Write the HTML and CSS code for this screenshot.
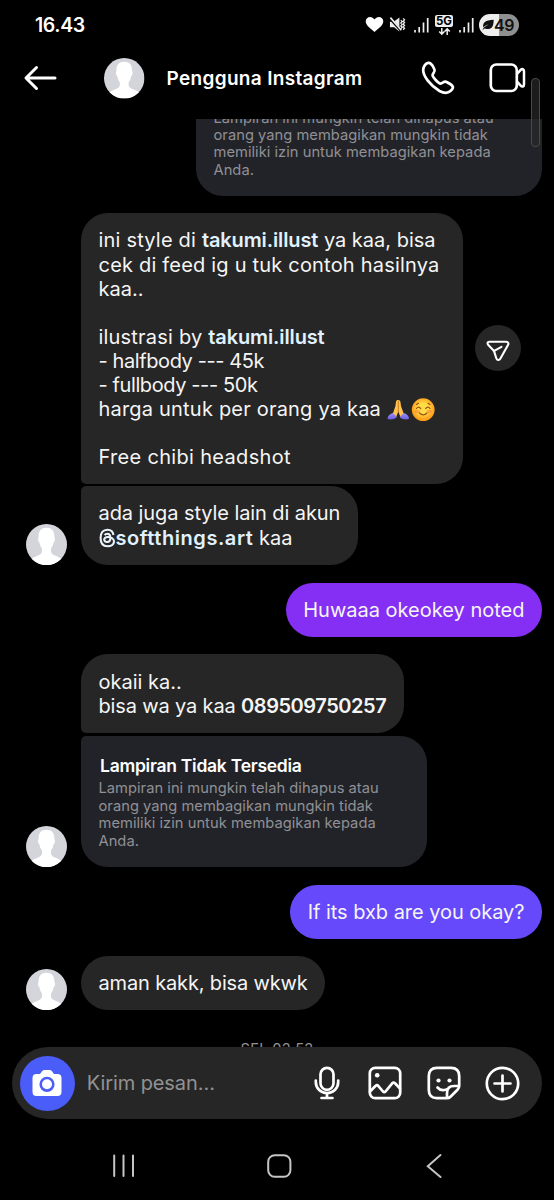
FILE: index.html
```
<!DOCTYPE html>
<html lang="id">
<head>
<meta charset="utf-8">
<title>Pengguna Instagram</title>
<link rel="stylesheet" href="styles.css">
</head>
<body>
<svg class="defs" width="0" height="0">
  <defs>
    <symbol id="person" viewBox="0 0 41 41">
      <circle cx="20.500" cy="20.500" r="20.500" fill="#d3d5db"/>
      <path d="M20.500 3.800C15 3.800 12.300 7.500 12.600 13.200C11.600 13.700 11.900 17.500 13.400 18.300C13.900 21.500 14.800 23 16 24.600C16.300 29 15.500 30.300 11.500 31.700C8 33 6.600 34.300 5.600 34.700A20.500 20.500 0 0 0 35.400 34.700C34.400 34.300 33 33 29.500 31.700C25.500 30.300 24.700 29 25 24.600C26.200 23 27.100 21.500 27.600 18.300C29.100 17.500 29.400 13.700 28.400 13.200C28.700 7.500 26 3.800 20.500 3.800Z" fill="#fff"/>
    </symbol>
    <symbol id="signal" viewBox="0 0 15 16">
      <path d="M1 13v2.500M5.200 10v5.500M9.500 5.500v10M13.700 1v14.500" stroke="#eee" stroke-width="1.700" fill="none"/>
    </symbol>
  </defs>
</svg>
<div class="phone">
  <div class="status">
    <span class="clock">16.43</span>
    <div class="indicators">
      <svg class="heart" width="19" height="17" viewBox="0 0 19 17"><path d="M9.500 16C6 13 .700 9.500.700 5.300C.700 .500 7-.800 9.500 3.500C12-.800 18.300.500 18.300 5.300C18.300 9.500 13 13 9.500 16Z" fill="#fff"/></svg>
      <svg class="mute" width="17" height="17" viewBox="0 0 18 17"><path d="M1 5.500h4L11 1v15L5.500 11.500H1Z" fill="#eee"/><path d="M0 1 13 15.500" stroke="#000" stroke-width="2.600"/><path d="M1.500 1.200 13 14.500" stroke="#eee" stroke-width="1.700"/><path d="M12.500 4l1.500 1.500-1.500 1.500 1.500 1.500-1.500 1.500 1.500 1.500-1.500 1.500M15 2l1.500 1.500L15 5l1.500 1.500L15 8l1.500 1.500L15 11l1.500 1.500L15 14" fill="none" stroke="#eee" stroke-width="1.300"/></svg>
      <svg class="sig-a" width="15" height="16"><use href="#signal"/></svg>
      <div class="net"><span class="net-label">5G</span><svg width="13" height="7" viewBox="0 0 13 7"><path d="M3.800 0v6M1.200 3.500 3.800 6.100l2.600-2.600M9.200 7V1M6.600 3.500 9.200.900l2.600 2.600" fill="none" stroke="#eee" stroke-width="1.500"/></svg></div>
      <svg class="sig-b" width="15" height="16"><use href="#signal"/></svg>
      <div class="battery"><svg width="12" height="12" viewBox="0 0 12 12"><path d="M.500 11.500C1 9 2.500 7.500 6.500 5.500C4 6 2.500 7 1.200 8.500C.500 4 3 1 11.700.800C11.500 6 11 9.500 6.500 10C4.500 10.200 3 9.800 2.300 9.500Z" fill="#111"/></svg><span>49</span></div>
    </div>
  </div>
  <header class="header">
    <svg class="back" width="34" height="26" viewBox="0 0 34 26"><path d="M31 13H2.500M12.500 2.500 2 13 12.500 23.500" fill="none" stroke="#fff" stroke-width="3" stroke-linecap="round" stroke-linejoin="round"/></svg>
    <svg class="head-avatar" width="40.500" height="40.500"><use href="#person"/></svg>
    <h1 class="name">Pengguna Instagram</h1>
    <svg class="call" width="34" height="34" viewBox="0 0 34 34"><path d="M7.200 1.800C5 2 2.200 5.500 2.200 9C2.200 15 9 24.500 18.500 30C23.500 32.600 26.500 32.600 29.500 30C31.500 28.200 32.500 26.600 31.600 25.200C30.800 23.900 26.500 21.400 25 20.700C22.500 19.600 21.500 23.300 18.800 22.500C16.500 21.500 12.500 16.800 11.600 14.700C11 12 14.500 11.500 13.500 8.700C13 7 10.800 3.500 9.700 2.600C9 2 8.300 1.700 7.200 1.800Z" fill="none" stroke="#fff" stroke-width="2.700" stroke-linejoin="round"/></svg>
    <svg class="video" width="37" height="30" viewBox="0 0 37 30"><rect x="1.800" y="1.500" width="26" height="26.500" rx="5.500" fill="none" stroke="#fff" stroke-width="2.700"/><path d="M28 11 31.700 6.800C33 5.600 35 6 35 8.200V21.500C35 23.700 33 24.100 31.700 22.700L28 18.600" fill="none" stroke="#fff" stroke-width="2.500" stroke-linejoin="round"/></svg>
  </header>
  <main class="chat">
    <div class="bubble card sent first">
      <p class="card-text">Lampiran ini mungkin telah dihapus atau<br>orang yang membagikan mungkin tidak<br>memiliki izin untuk membagikan kepada<br>Anda.</p>
    </div>
    <div class="row style-row">
      <div class="bubble start intro"><span class="wide">ini style di </span><b>takumi.illust</b> ya kaa, bisa<br><span class="wide">cek di feed ig u tuk contoh hasilnya</span><br>kaa..<br><br><span class="wide">ilustrasi by </span><b>takumi.illust</b><br><span class="tight">- halfbody --- 45k</span><br><span class="tight">- fullbody --- 50k</span><br><span class="wide">harga untuk per orang ya kaa </span><svg class="emoji" width="48" height="23" viewBox="0 0 48 23"><defs><radialGradient id="face" cy=".45"><stop offset=".45" stop-color="#ffdc45"/><stop offset="1" stop-color="#ff9d19"/></radialGradient><linearGradient id="sleeve" x2="0" y2="1"><stop stop-color="#a08df8"/><stop offset="1" stop-color="#6c5fe0"/></linearGradient></defs><path d="M10.800 2C8.800 2 9 4 8.500 8L5.500 16.500 9 19.500 11.300 13.500 13.600 19.500 17 16.500 14 8C13.500 4 13.500 2 11.700 2Z" fill="#ffc34d"/><path d="M11.300 2.500V14" stroke="#c97b22" stroke-width="1"/><path d="M5.800 15 10 19C7.500 21.500 3.500 22 .700 21C.300 18.500 2.500 16 5.800 15ZM16.800 15 12.600 19C15.100 21.500 19.100 22 21.900 21C22.300 18.500 20.100 16 16.800 15Z" fill="url(#sleeve)"/><circle cx="36.200" cy="11.700" r="11.400" fill="url(#face)"/><path d="M29.500 10.500Q31.500 7.800 33.700 10.500M38.700 10.500Q41 7.800 43 10.500M32.500 15Q36.200 18.800 40 15M29.500 6.500 31.500 5.300M43 6.500 41 5.300" fill="none" stroke="#99521c" stroke-width="1.200" stroke-linecap="round"/><path d="M29 13.500h2.500M41 13.500h2.500" stroke="#fa7946" stroke-width="3" stroke-linecap="round" opacity=".5"/></svg><br><br><span class="wider">Free chibi headshot</span></div>
      <div class="share"><svg width="24" height="22" viewBox="0 0 24 22"><path d="M3.300 1.800H20.300C22.300 1.800 22.900 3.500 22 5L14.300 18.800C13.200 20.700 10.900 20.300 10.300 18.300L8.200 11.600C8 11 7.600 10.500 7.100 10L2.300 5C.900 3.600 1.400 1.800 3.300 1.800ZM8.200 10.800 15.500 6.800" fill="none" stroke="#fff" stroke-width="2.100" stroke-linecap="round" stroke-linejoin="round"/></svg></div>
    </div>
    <div class="row">
      <svg class="avatar" width="41" height="41"><use href="#person"/></svg>
      <div class="bubble end duo"><span class="snug">ada juga style lain di akun</span><br><svg class="threads" width="17" height="20" viewBox="0 0 17 20"><path d="M14.500 7C13.900 3.200 11.800 1.700 8.500 1.700C3.800 1.700 1.600 5 1.600 10S3.900 18.300 8.500 18.300C12.500 18.300 15 16.300 15 13.600C15 10.300 11.700 9 8.700 9C6.500 9 5.200 10.200 5.200 11.600C5.200 13.200 6.500 14.100 8.200 14C10.600 13.900 11.500 12.200 11.400 9.500C11.300 7 10.200 5.800 8.400 5.800C7.200 5.800 6.200 6.300 5.600 7.200" fill="none" stroke="#e9f3fc" stroke-width="2.100"/></svg><b class="handle">softthings.art</b> kaa</div>
    </div>
    <div class="bubble sent purple">Huwaaa okeokey noted</div>
    <div class="row next">
      <div class="bubble start duo">okaii ka..<br><span class="snug-more">bisa wa ya kaa </span><b class="phone-no">089509750257</b></div>
    </div>
    <div class="row">
      <svg class="avatar" width="41" height="41"><use href="#person"/></svg>
      <div class="bubble end card">
        <h2 class="card-title">Lampiran Tidak Tersedia</h2>
        <p class="card-text">Lampiran ini mungkin telah dihapus atau<br>orang yang membagikan mungkin tidak<br>memiliki izin untuk membagikan kepada<br>Anda.</p>
      </div>
    </div>
    <div class="bubble sent indigo">If its bxb are you okay?</div>
    <div class="row next">
      <svg class="avatar" width="41" height="41"><use href="#person"/></svg>
      <div class="bubble snug-more">aman kakk, bisa wkwk</div>
    </div>
    <div class="date">SEL 02.52</div>
  </main>
  <div class="composer">
    <div class="camera"><svg width="30" height="28" viewBox="0 0 30 28"><path d="M4.500 5H8L10 2.300Q11 1 12.500 1H17.500Q19 1 20 2.300L22 5H25.500Q29.500 5 29.500 9V23Q29.500 27 25.500 27H4.500Q.500 27 .500 23V9Q.500 5 4.500 5Z" fill="#fff"/><circle cx="15" cy="15.300" r="6.300" fill="#fff" stroke="#4a5df9" stroke-width="2.600"/></svg></div>
    <span class="placeholder">Kirim pesan…</span>
    <svg class="mic" width="26" height="34" viewBox="0 0 26 34"><rect x="6.500" y="1.800" width="13" height="22" rx="6.500"/><path d="M1.800 14.500V16C1.800 22.500 7 27 13 27S24.200 22.500 24.200 16V14.500M13 27V32M7.500 32H18.500"/></svg>
    <svg class="pic" width="34" height="34" viewBox="0 0 34 34"><rect x="1.800" y="1.800" width="30.400" height="30.400" rx="5.500"/><circle cx="9.200" cy="9.200" r="2.300" class="dot"/><path d="M2 25.500 7.700 19.700Q9 18.700 10.200 19.800L15 25.500Q16.200 26.600 17.500 25.500L24.200 17.300Q25.500 16 27 17.300L32 22.500"/></svg>
    <svg class="stick" width="34" height="34" viewBox="0 0 34 34"><path d="M20 32.200H10Q1.800 32.200 1.800 24V10Q1.800 1.800 10 1.800H24Q32.200 1.800 32.200 10V20Q32.200 22 30.500 23.700L23.500 30.700Q22 32.200 20 32.200ZM20 32V27Q20 20 27 20H32M10.500 21.500Q14 25.500 19.500 23.500"/><circle cx="11.500" cy="14.500" r="2.100" class="dot"/><circle cx="22.500" cy="14.500" r="2.100" class="dot"/></svg>
    <svg class="plus" width="35" height="35" viewBox="0 0 35 35"><circle cx="17.500" cy="17.500" r="15.700"/><path d="M17.500 9.500V25.500M9.500 17.500H25.500"/></svg>
  </div>
  <nav class="nav">
    <svg class="recents" width="22" height="24" viewBox="0 0 22 24"><path d="M1.200 1.500V22M10.500 1.500V22M20 1.500V22"/></svg>
    <svg class="home" width="25" height="24" viewBox="0 0 25 24"><rect x="1.200" y="1.200" width="22.200" height="21.600" rx="6.500"/></svg>
    <svg class="prev" width="16" height="24" viewBox="0 0 16 24"><path d="M14.500 1 1.800 12.200 14.500 23"/></svg>
  </nav>
  <div class="scrollbar"></div>
</div>
</body>
</html>
```

FILE: styles.css
```
* { box-sizing: border-box; }
body { margin: 0; background: #000; color: #f5f5f5; font-family: Inter, "Liberation Sans", sans-serif; }
svg { display: block; flex: none; overflow: visible; }
.defs { position: absolute; }
.phone { position: relative; width: 554px; height: 1200px; overflow: hidden; display: flex; flex-direction: column; background: #000; }

.status { height: 49px; flex: none; display: flex; justify-content: space-between; padding: 0 35px 0 35px; align-items: center; }
.clock { font-size: 19.500px; font-weight: 600; letter-spacing: -.4px; color: #fff; }
.indicators { display: flex; align-items: center; }
.mute { margin-left: 5px; }
.sig-a { margin-left: 8px; }
.net { margin-left: 6px; width: 18px; display: flex; flex-direction: column; align-items: center; gap: 1px; }
.net-label { width: 18px; height: 12px; border-radius: 2px; background: #eee; color: #000; font-size: 11.500px; line-height: 12px; font-weight: 700; text-align: center; }
.sig-b { margin-left: 5.500px; }
.battery { margin-left: 5.500px; width: 40px; height: 22px; border-radius: 11px; background: linear-gradient(90deg, #eee 49%, #909090 49%); display: flex; align-items: center; padding-left: 2.500px; color: #111; font-size: 16px; font-weight: 600; letter-spacing: -.5px; }
.battery span { margin-left: .5px; }

.header { height: 70px; flex: none; display: flex; align-items: center; padding: 0 28px 11.500px 24px; }
.head-avatar { margin-left: 46px; }
.name { margin: 0 0 0 22px; width: 256.500px; font-size: 19px; font-weight: 600; letter-spacing: .33px; color: #fff; white-space: nowrap; }
.video { margin-left: 34.500px; }

.chat { height: 928px; flex: none; overflow: hidden; display: flex; flex-direction: column; padding-right: 12px; }
.row { display: flex; align-items: flex-end; padding-left: 26px; margin-bottom: 2.500px; }
.avatar { margin-right: 14px; }
.bubble { flex: none; min-height: 53.500px; padding: 15.300px 17.500px 14.300px; border-radius: 27px; background: #262626; font-size: 20px; line-height: 24.100px; white-space: nowrap; }
.bubble b { font-weight: 600; letter-spacing: -.12px; color: #e0f1ff; }
.bubble .phone-no { letter-spacing: -.45px; color: #f5f5f5; }
.bubble .handle { letter-spacing: .55px; }
.wide { letter-spacing: .2px; }
.wider { letter-spacing: .32px; }
.tight { letter-spacing: -.4px; }
.snug { letter-spacing: -.08px; }
.snug-more { letter-spacing: -.15px; }
.intro { width: 382px; }
.start { margin-left: 55px; border-bottom-left-radius: 5px; }
.end { border-top-left-radius: 5px; }
.duo { line-height: 24.700px; }
.sent { align-self: flex-end; }
.purple { margin-top: 15.500px; background: #842ff3; }
.indigo { margin-top: 15px; letter-spacing: -.04px; background: #6549fb; }
.next { margin-top: 17.500px; }
.card { width: 346px; background: #222328; padding: 17.500px; }
.first { margin-top: -9.500px; padding-top: 0; padding-bottom: 16.500px; border-top-left-radius: 0; border-top-right-radius: 0; margin-bottom: 17.500px; }
.card-title { margin: 0 0 2px 1.500px; font-size: 17.500px; line-height: 25px; font-weight: 600; letter-spacing: -.26px; color: #fff; }
.card-text { margin: 0; font-size: 14.700px; line-height: 17.400px; letter-spacing: .03px; color: #909095; }
.emoji, .threads { display: inline-block; }
.emoji { vertical-align: -5px; }
.threads { vertical-align: -3px; }
.style-row { align-items: center; }
.share { width: 46px; height: 46px; margin-left: 12px; border-radius: 50%; background: #262626; display: flex; align-items: center; justify-content: center; padding-top: 5px; }
.date { margin-top: 28px; padding-left: 12px; text-align: center; font-size: 14.700px; letter-spacing: .25px; color: #909095; }

.composer { height: 72px; flex: none; margin: 0 12px; border-radius: 36px; background: #262626; display: flex; align-items: center; padding: 0 22px 0 8px; }
.camera { width: 55px; height: 55px; border-radius: 50%; background: #4a5df9; display: flex; align-items: center; justify-content: center; }
.placeholder { margin-left: 12px; width: 228px; font-size: 20px; letter-spacing: -.1px; color: #929292; }
.composer > svg { fill: none; stroke: #fff; stroke-width: 2.700px; stroke-linecap: round; stroke-linejoin: round; }
.composer .dot { fill: #fff; stroke: none; }
.pic { margin-left: 28px; }
.stick { margin-left: 25px; }
.plus { margin-left: 24px; }

.nav { flex: 1; display: flex; align-items: center; padding: 12px 0 0 113px; fill: none; stroke: #c5c5c5; stroke-width: 2px; stroke-linecap: round; }
.home { margin-left: 132px; }
.prev { margin-left: 134px; }
.scrollbar { position: absolute; left: 531px; top: 78px; width: 9px; height: 69px; border: 1.500px solid #494949; border-radius: 4px; background: rgba(40,40,40,.7); }
```
